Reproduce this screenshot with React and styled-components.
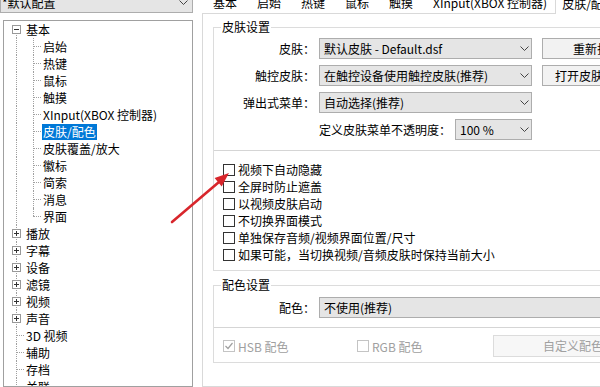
import React from "react";
import styled, { createGlobalStyle } from "styled-components";

const GlobalStyle = createGlobalStyle`
  html, body {
    margin: 0;
    padding: 0;
    background: #fff;
  }
  body {
    font-family: "Noto Sans CJK SC", "Noto Sans", sans-serif;
    font-size: 12px;
    color: #000;
    overflow: hidden;
  }
`;

const Window = styled.div`
  position: relative;
  display: flex;
  width: 600px;
  height: 387px;
  overflow: hidden;
  background: #fff;
`;

const LeftPane = styled.div`
  display: flex;
  flex-direction: column;
  flex: none;
  width: 193px;
`;

const Combo = styled.div`
  display: flex;
  align-items: center;
  justify-content: space-between;
  box-sizing: border-box;
  flex: ${({ $grow }) => ($grow ? 1 : "none")};
  width: ${({ $w }) => ($w ? `${$w}px` : "auto")};
  height: ${({ $h }) => $h || 21}px;
  margin-top: ${({ $mt }) => $mt || 0}px;
  padding: 0 ${({ $pr }) => $pr ?? 2}px 0 ${({ $pl }) => $pl ?? 4}px;
  background: #e5e5e5;
  border: 1px solid #adadad;
  white-space: nowrap;
  overflow: hidden;
`;

const Tree = styled.div`
  flex: 1;
  box-sizing: border-box;
  width: 190px;
  margin: 7px 0 0 3px;
  border: 1px solid #a0a0a0;
  background: #fff;
  overflow: hidden;
`;

const TreeRow = styled.div`
  display: flex;
  height: 17px;
`;

const Guide = styled.div`
  position: relative;
  flex: none;
  width: ${({ $w }) => $w}px;

  &::before {
    content: "";
    display: ${({ $v }) => ($v ? "block" : "none")};
    position: absolute;
    left: ${({ $x }) => $x}px;
    top: ${({ $v }) => ($v === "bottom" ? "8px" : "0")};
    bottom: ${({ $v }) => ($v === "top" ? "9px" : "0")};
    border-left: 1px dotted #a0a0a0;
  }

  &::after {
    content: "";
    display: ${({ $dash }) => ($dash ? "block" : "none")};
    position: absolute;
    left: ${({ $x }) => $x}px;
    top: 8px;
    width: 8px;
    border-top: 1px dotted #a0a0a0;
  }
`;

const Expander = styled.span`
  position: absolute;
  left: ${({ $x }) => $x - 4}px;
  top: 4px;
  z-index: 1;
  box-sizing: border-box;
  width: 9px;
  height: 9px;
  border: 1px solid #999;
  background: #fff;

  &::before {
    content: "";
    position: absolute;
    left: 1px;
    top: 3px;
    width: 5px;
    height: 1px;
    background: #333;
  }

  &::after {
    content: "";
    display: ${({ $open }) => ($open ? "none" : "block")};
    position: absolute;
    left: 3px;
    top: 1px;
    width: 1px;
    height: 5px;
    background: #333;
  }
`;

const NodeLabel = styled.span`
  align-self: flex-start;
  margin-top: 1px;
  height: 16px;
  line-height: 16px;
  padding: 0 1px;
  white-space: nowrap;
  background: ${({ $selected }) => ($selected ? "#0078d7" : "transparent")};
  color: ${({ $selected }) => ($selected ? "#fff" : "#000")};
`;

const RightPane = styled.div`
  display: flex;
  flex-direction: column;
  flex: none;
  width: 460px;
  margin-left: 9px;
`;

const TabRow = styled.div`
  display: flex;
  align-items: flex-start;
  height: 20px;
  margin-top: -7px;
  padding-left: 1px;
`;

const Tab = styled.div`
  position: relative;
  z-index: 1;
  box-sizing: border-box;
  height: ${({ $active }) => ($active ? 21 : 20)}px;
  line-height: 20px;
  margin-left: ${({ $active }) => ($active ? -2 : 0)}px;
  padding: ${({ $active }) => ($active ? "0 10px 0 6px" : "0 10px")};
  white-space: nowrap;
  background: #fff;
  border: ${({ $active }) => ($active ? "1px solid #d9d9d9" : "none")};
  border-bottom: none;
`;

const Panel = styled.div`
  flex: 1;
  padding-left: 10px;
  border: 1px solid #d9d9d9;
  background: #fff;
`;

const Group = styled.fieldset`
  box-sizing: border-box;
  width: 440px;
  min-width: 0;
  margin: ${({ $mt }) => $mt}px 0 0 0;
  padding: ${({ $pt }) => $pt}px 0 ${({ $pb }) => $pb}px 0;
  border: 1px solid #dcdcdc;
`;

const Legend = styled.legend`
  margin-left: 7px;
  padding: 0 1px;
  line-height: 16px;
  font-size: 12px;
`;

const FormRow = styled.div`
  display: flex;
  align-items: center;
  height: ${({ $h }) => $h || 21}px;
  margin-bottom: ${({ $mb }) => $mb ?? 6}px;
`;

const FieldLabel = styled.div`
  flex: none;
  width: ${({ $w }) => $w}px;
  margin-right: 4px;
  text-align: right;
  white-space: nowrap;
`;

const PushButton = styled.div`
  flex: none;
  box-sizing: border-box;
  width: ${({ $w }) => $w || 110}px;
  height: ${({ $h }) => $h || 21}px;
  margin-left: ${({ $ml }) => $ml ?? 10}px;
  line-height: ${({ $h }) => ($h || 21) - 2}px;
  text-align: center;
  white-space: nowrap;
  background: ${({ $disabled }) => ($disabled ? "#f7f7f7" : "#f2f2f2")};
  border: 1px solid ${({ $disabled }) => ($disabled ? "#dcdcdc" : "#adadad")};
  color: ${({ $disabled }) => ($disabled ? "#a0a0a0" : "#000")};
`;

const Divider = styled.div`
  height: 1px;
  margin-top: ${({ $mt }) => $mt}px;
  background: #d5d5d5;
`;

const CheckList = styled.div`
  display: flex;
  flex-direction: column;
  margin-top: 10px;
  padding-left: 9px;
`;

const CheckRow = styled.div`
  display: flex;
  align-items: center;
  gap: 3px;
  flex: none;
  width: ${({ $w }) => ($w ? `${$w}px` : "auto")};
  height: 17px;
  white-space: nowrap;
  color: ${({ $disabled }) => ($disabled ? "#a0a0a0" : "#000")};
`;

const Box = styled.span`
  display: flex;
  align-items: center;
  justify-content: center;
  flex: none;
  box-sizing: border-box;
  width: 12px;
  height: 12px;
  background: #fff;
  border: 1px solid ${({ $disabled }) => ($disabled ? "#c4c4c4" : "#333")};
`;

const BottomRow = styled.div`
  display: flex;
  align-items: center;
  height: 22px;
  margin-top: 7px;
  padding-left: 9px;
`;

const Annotation = styled.svg`
  position: absolute;
  left: 0;
  top: 0;
  pointer-events: none;
`;

const Chevron = () => (
  <svg width="9" height="5" viewBox="0 0 9 5">
    <polyline points="0.5,0.5 4.5,4.5 8.5,0.5" fill="none" stroke="#444" strokeWidth="1" />
  </svg>
);

const Check = ({ checked, disabled, children, width }) => (
  <CheckRow $disabled={disabled} $w={width}>
    <Box $disabled={disabled}>
      {checked && (
        <svg width="10" height="10" viewBox="0 0 10 10">
          <polyline points="1.5,5 4,7.5 8.5,2" fill="none" stroke="#a0a0a0" strokeWidth="1.2" />
        </svg>
      )}
    </Box>
    {children}
  </CheckRow>
);

const tree = [
  { label: "基本", box: "open", first: true },
  { label: "启始", child: true },
  { label: "热键", child: true },
  { label: "鼠标", child: true },
  { label: "触摸", child: true },
  { label: "XInput(XBOX 控制器)", child: true },
  { label: "皮肤/配色", child: true, selected: true },
  { label: "皮肤覆盖/放大", child: true },
  { label: "徽标", child: true },
  { label: "简索", child: true },
  { label: "消息", child: true },
  { label: "界面", child: true, last: true },
  { label: "播放", box: "closed" },
  { label: "字幕", box: "closed" },
  { label: "设备", box: "closed" },
  { label: "滤镜", box: "closed" },
  { label: "视频", box: "closed" },
  { label: "声音", box: "closed" },
  { label: "3D 视频" },
  { label: "辅助" },
  { label: "存档" },
  { label: "关联" },
];

const TreeNode = ({ node }) => {
  if (node.child) {
    return (
      <TreeRow>
        <Guide $w={21} $x={12} $v="full" />
        <Guide $w={17} $x={8} $v={node.last ? "top" : "full"} $dash />
        <NodeLabel $selected={node.selected}>{node.label}</NodeLabel>
      </TreeRow>
    );
  }
  return (
    <TreeRow>
      <Guide $w={21} $x={12} $v={node.first ? "bottom" : "full"} $dash={!node.box}>
        {node.box && <Expander $x={12} $open={node.box === "open"} />}
      </Guide>
      <NodeLabel>{node.label}</NodeLabel>
    </TreeRow>
  );
};

const tabs = ["基本", "启始", "热键", "鼠标", "触摸", "XInput(XBOX 控制器)"];

const options = [
  "视频下自动隐藏",
  "全屏时防止遮盖",
  "以视频皮肤启动",
  "不切换界面模式",
  "单独保存音频/视频界面位置/尺寸",
  "如果可能，当切换视频/音频皮肤时保持当前大小",
];

export default function App() {
  return (
    <>
      <GlobalStyle />
      <Window>
        <LeftPane>
          <Combo $w={193} $h={22} $mt={-9} $pl={1} $pr={4}>
            <span>*默认配置</span>
            <Chevron />
          </Combo>
          <Tree>
            {tree.map((node) => (
              <TreeNode key={node.label} node={node} />
            ))}
          </Tree>
        </LeftPane>

        <RightPane>
          <TabRow>
            {tabs.map((t) => (
              <Tab key={t}>{t}</Tab>
            ))}
            <Tab $active>皮肤/配色</Tab>
          </TabRow>
          <Panel>
            <Group $mt={5} $pt={3} $pb={7}>
              <Legend>皮肤设置</Legend>
              <FormRow>
                <FieldLabel $w={101}>皮肤：</FieldLabel>
                <Combo $w={213}>
                  <span>默认皮肤 - Default.dsf</span>
                  <Chevron />
                </Combo>
                <PushButton>重新扫描</PushButton>
              </FormRow>
              <FormRow>
                <FieldLabel $w={101}>触控皮肤：</FieldLabel>
                <Combo $w={213}>
                  <span>在触控设备使用触控皮肤(推荐)</span>
                  <Chevron />
                </Combo>
                <PushButton>打开皮肤文件夹</PushButton>
              </FormRow>
              <FormRow>
                <FieldLabel $w={101}>弹出式菜单：</FieldLabel>
                <Combo $w={213}>
                  <span>自动选择(推荐)</span>
                  <Chevron />
                </Combo>
              </FormRow>
              <FormRow $mb={0}>
                <FieldLabel $w={237}>定义皮肤菜单不透明度：</FieldLabel>
                <Combo $w={77}>
                  <span>100 %</span>
                  <Chevron />
                </Combo>
              </FormRow>
              <Divider $mt={10} />
              <CheckList>
                {options.map((o) => (
                  <Check key={o}>{o}</Check>
                ))}
              </CheckList>
            </Group>

            <Group $mt={6} $pt={4} $pb={5}>
              <Legend>配色设置</Legend>
              <FormRow $mb={0}>
                <FieldLabel $w={101}>配色：</FieldLabel>
                <Combo $grow>
                  <span>不使用(推荐)</span>
                </Combo>
              </FormRow>
              <Divider $mt={9} />
              <BottomRow>
                <Check checked disabled width={134}>HSB 配色</Check>
                <Check disabled width={136}>RGB 配色</Check>
                <PushButton $disabled $w={160} $h={22} $ml={0}>自定义配色</PushButton>
              </BottomRow>
            </Group>
          </Panel>
        </RightPane>

        <Annotation width="600" height="387" viewBox="0 0 600 387">
          <line x1="172" y1="222" x2="219" y2="182" stroke="#d8262c" strokeWidth="2.6" strokeLinecap="round" />
          <polygon points="229,173 221.7,186.5 214.6,178" fill="#d8262c" />
        </Annotation>
      </Window>
    </>
  );
}
